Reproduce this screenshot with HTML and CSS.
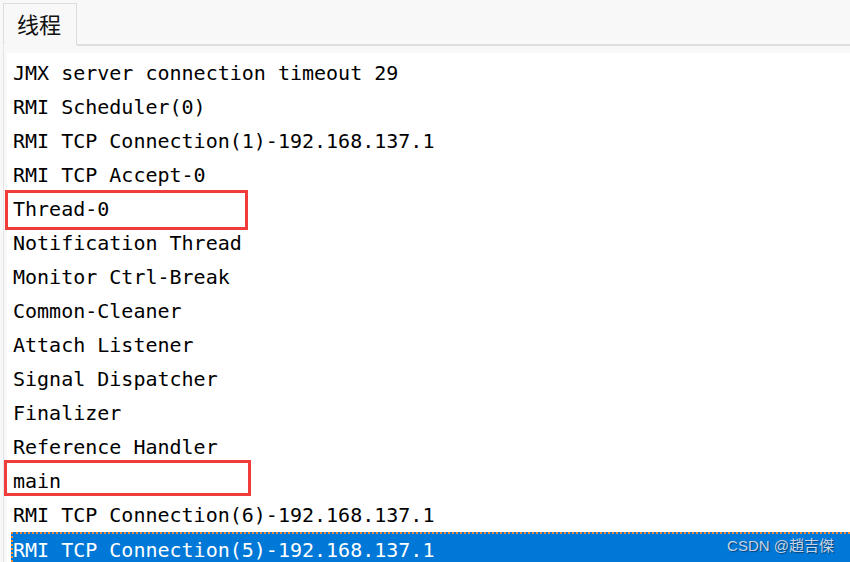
FILE: index.html
```html
<!DOCTYPE html>
<html>
<head>
<meta charset="utf-8">
<link rel="stylesheet" href="styles.css">
</head>
<body>
<div class="tabs">
  <div class="tab">线程</div>
  <div class="tab-rest"></div>
</div>
<div class="panel">
  <ul class="list">
    <li class="row">JMX server connection timeout 29</li>
    <li class="row">RMI Scheduler(0)</li>
    <li class="row">RMI TCP Connection(1)-192.168.137.1</li>
    <li class="row">RMI TCP Accept-0</li>
    <li class="row">Thread-0</li>
    <li class="row">Notification Thread</li>
    <li class="row">Monitor Ctrl-Break</li>
    <li class="row">Common-Cleaner</li>
    <li class="row">Attach Listener</li>
    <li class="row">Signal Dispatcher</li>
    <li class="row">Finalizer</li>
    <li class="row">Reference Handler</li>
    <li class="row">main</li>
    <li class="row">RMI TCP Connection(6)-192.168.137.1</li>
    <li class="row selected">RMI TCP Connection(5)-192.168.137.1</li>
  </ul>
</div>
<div class="mark mark-thread"></div>
<div class="mark mark-main"></div>
<div class="watermark">CSDN @趙吉傑</div>
</body>
</html>
```

FILE: styles.css
```css
html, body {
  margin: 0;
  padding: 0;
  height: 100%;
  overflow: hidden;
}
body {
  background: #f8f8f8;
  position: relative;
  font-family: "DejaVu Sans Mono", "Liberation Mono", monospace;
}
.tabs {
  display: flex;
  padding: 3px 0 0 3px;
  height: 43px;
}
.tab {
  width: 74px;
  height: 42px;
  border: 1px solid #dcdcdc;
  border-bottom: none;
  background: #f8f8f8;
  font-family: "Noto Sans CJK SC", "Microsoft YaHei", sans-serif;
  font-size: 22px;
  color: #111;
  line-height: 38px;
  padding-left: 13px;
  box-sizing: border-box;
}
.tab-rest {
  flex: 1;
  border-bottom: 2px solid #dedede;
  height: 41px;
}
.panel {
  margin-left: 3px;
  border-left: 1px solid #e4e4e4;
  padding: 7px 0 0 3px;
  height: 520px;
}
.list {
  list-style: none;
  margin: 0;
  padding: 3px 0 0 4px;
  background: #fff;
  height: 100%;
}
.row {
  height: 34px;
  line-height: 34px;
  font-size: 20px;
  color: #000;
  padding-left: 2px;
  white-space: nowrap;
  box-sizing: border-box;
}
.row.selected {
  background: #0078d7;
  color: #fff;
  border-top: 2px dotted #f08a2c;
  border-left: 2px dotted #f08a2c;
  line-height: 32px;
  padding-left: 0;
}
.mark {
  position: absolute;
  border: 3px solid #f13c3c;
  box-sizing: border-box;
}
.mark-thread {
  left: 5px;
  top: 190px;
  width: 243px;
  height: 40px;
}
.mark-main {
  left: 4px;
  top: 460px;
  width: 247px;
  height: 36px;
}
.watermark {
  position: absolute;
  right: 16px;
  top: 534px;
  font-family: "Liberation Sans", "Noto Sans CJK SC", sans-serif;
  font-size: 15px;
  color: #c9d3e3;
  text-shadow: 1px 1px 1px rgba(0, 0, 0, 0.45);
}
```
